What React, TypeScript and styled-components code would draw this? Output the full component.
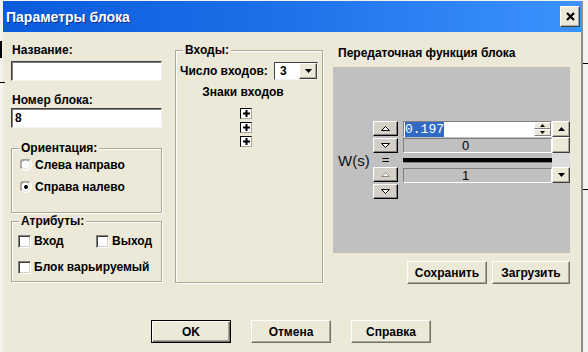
import styled, { createGlobalStyle } from "styled-components";

const GlobalStyle = createGlobalStyle`
	html, body {
		margin: 0;
		padding: 0;
		background: #f4f3ee;
	}
	body {
		position: relative;
		width: 588px;
		height: 352px;
		overflow: hidden;
		font-family: "Liberation Sans", Arial, sans-serif;
		color: #000;
	}
`;

// bits of the window that lies behind the dialog
const Mark = styled.div<{ $top: number; $left: number; $w: number; $h: number }>`
	position: absolute;
	top: ${(p) => p.$top}px;
	left: ${(p) => p.$left}px;
	width: ${(p) => p.$w}px;
	height: ${(p) => p.$h}px;
	background: #000;
`;

const Dialog = styled.div`
	margin: 1px 0 0 3px;
	width: 578px;
	height: 351px;
	border-right: 2px solid #8e8d86;
	background: #ece9d8;
	display: flex;
	flex-direction: column;
`;

const TitleBar = styled.div`
	height: 31px;
	flex-shrink: 0;
	display: flex;
	align-items: center;
	justify-content: space-between;
	padding: 0 1px 0 3px;
	background: linear-gradient(to right, #0a5bdc 0%, #1c6fe8 45%, #3b93fe 100%);
`;

const Title = styled.span`
	color: #fff;
	font: bold 14px "Liberation Sans", Arial, sans-serif;
	text-shadow: 1px 1px 0 #0b2f8a;
`;

const CloseButton = styled.div`
	width: 20px;
	height: 21px;
	box-sizing: border-box;
	display: flex;
	align-items: center;
	justify-content: center;
	background: #ece9d8;
	border: 1px solid;
	border-color: #fff #404040 #404040 #fff;
	box-shadow: inset -1px -1px 0 #aca899;
`;

const Body = styled.div`
	flex: 1;
	display: flex;
	flex-direction: column;
	padding-left: 8px;
`;

const TopRow = styled.div`
	display: flex;
	align-items: flex-start;
`;

const LeftCol = styled.div`
	width: 151px;
	padding-top: 11px;
	display: flex;
	flex-direction: column;
`;

const Label = styled.div<{ $gap?: number }>`
	font-weight: bold;
	font-size: 12px;
	line-height: 14px;
	height: 14px;
	padding-left: 1px;
	margin-top: ${(p) => p.$gap ?? 0}px;
	white-space: nowrap;
`;

const TextBox = styled.div<{ $gap?: number }>`
	height: 20px;
	box-sizing: border-box;
	margin-top: ${(p) => p.$gap ?? 0}px;
	background: #fff;
	border: 1px solid;
	border-color: #404040 #f4f3ee #f4f3ee #404040;
	box-shadow: inset 1px 1px 0 #808080;
	font: bold 12px "Liberation Sans", Arial, sans-serif;
	line-height: 18px;
	padding-left: 3px;
`;

const Group = styled.div<{ $gap?: number; $h: number }>`
	position: relative;
	box-sizing: border-box;
	height: ${(p) => p.$h}px;
	margin-top: ${(p) => p.$gap ?? 0}px;
	border: 1px solid #aca899;
	box-shadow: inset 1px 1px 0 #fff, 1px 1px 0 #fff;
`;

const Legend = styled.span`
	position: absolute;
	top: -8px;
	left: 7px;
	padding: 0 2px;
	background: #ece9d8;
	font-weight: bold;
	font-size: 12px;
	line-height: 14px;
`;

const RadioList = styled.div`
	display: flex;
	flex-direction: column;
	gap: 6px;
	padding: 8px 0 0 8px;
`;

const OptionRow = styled.div<{ $width?: number }>`
	height: 16px;
	display: flex;
	align-items: center;
	gap: 3px;
	font-weight: bold;
	font-size: 12px;
	white-space: nowrap;
	width: ${(p) => (p.$width ? `${p.$width}px` : "auto")};
`;

const CheckList = styled.div`
	display: flex;
	flex-direction: column;
	gap: 10px;
	padding: 11px 0 0 6px;
`;

const CheckLine = styled.div`
	display: flex;
`;

const CheckBox = styled.span`
	width: 13px;
	height: 13px;
	box-sizing: border-box;
	background: #fff;
	border: 1px solid;
	border-color: #808080 #fff #fff #808080;
	box-shadow: inset 1px 1px 0 #404040, inset -1px -1px 0 #d4d0c8;
	flex-shrink: 0;
`;

const MidGroup = styled(Group)`
	width: 148px;
	margin-left: 13px;
	margin-top: 18px;
	padding: 11px 4px 0 4px;
	display: flex;
	flex-direction: column;
`;

const CountRow = styled.div`
	height: 18px;
	display: flex;
	align-items: center;
	justify-content: space-between;
	font-weight: bold;
	font-size: 12px;
`;

const Select = styled.div`
	width: 44px;
	height: 18px;
	box-sizing: border-box;
	display: flex;
	align-items: stretch;
	justify-content: space-between;
	background: #fff;
	border: 1px solid;
	border-color: #404040 #f4f3ee #f4f3ee #404040;
	font-weight: bold;
	font-size: 12px;
	line-height: 16px;
	padding-left: 5px;
`;

const DropButton = styled.span`
	width: 18px;
	box-sizing: border-box;
	display: flex;
	align-items: center;
	justify-content: center;
	background: #ece9d8;
	border: 1px solid;
	border-color: #fff #404040 #404040 #fff;
	box-shadow: inset -1px -1px 0 #aca899;
`;

const Caption = styled.div`
	margin-top: 5px;
	height: 14px;
	line-height: 14px;
	text-align: center;
	padding-right: 12px;
	font-weight: bold;
	font-size: 12px;
`;

const SignList = styled.div`
	margin: 9px 0 0 60px;
	display: flex;
	flex-direction: column;
	gap: 3px;
`;

const SignBox = styled.span`
	width: 12px;
	height: 11px;
	box-sizing: border-box;
	display: flex;
	align-items: center;
	justify-content: center;
	background: #fff;
	border: 1px solid;
	border-color: #000 #aca899 #aca899 #000;
`;

const RightCol = styled.div`
	width: 237px;
	margin-left: 10px;
	display: flex;
	flex-direction: column;
`;

const PanelTitle = styled.div`
	margin-top: 14px;
	padding-left: 5px;
	height: 14px;
	line-height: 14px;
	font-weight: bold;
	font-size: 12px;
	white-space: nowrap;
`;

const Panel = styled.div`
	margin-top: 7px;
	height: 186px;
	background: #c0c0c0;
	display: flex;
	align-items: flex-start;
	padding: 54px 0 0 5px;
	box-sizing: border-box;
`;

const WsLabel = styled.span`
	width: 35px;
	margin-top: 32px;
	font-size: 15px;
	line-height: 16px;
	color: #111;
`;

const ArrowCol = styled.div`
	width: 25px;
	display: flex;
	flex-direction: column;
`;

const ArrowButton = styled.div<{ $gap?: number }>`
	height: 15px;
	box-sizing: border-box;
	margin-top: ${(p) => p.$gap ?? 0}px;
	display: flex;
	align-items: center;
	justify-content: center;
	background: #d4d0c8;
	border: 1px solid;
	border-color: #fff #000 #000 #fff;
	box-shadow: inset -1px -1px 0 #808080;
`;

const Equals = styled.div`
	height: 14px;
	line-height: 14px;
	text-align: center;
	font-size: 13px;
`;

const FieldCol = styled.div`
	width: 149px;
	margin-left: 5px;
	display: flex;
	flex-direction: column;
`;

const EditBox = styled.div`
	height: 16px;
	box-sizing: border-box;
	display: flex;
	background: #fff;
	border: 1px solid;
	border-color: #808080 #fff #fff #808080;
`;

const EditText = styled.div`
	flex: 1;
	padding: 1px 0 0 1px;
	font: 13px "Liberation Mono", "Courier New", monospace;
	line-height: 13px;
`;

const Selection = styled.span`
	background: #316ac5;
	color: #fff;
`;

const Spin = styled.div`
	width: 17px;
	display: flex;
	flex-direction: column;
`;

const SpinHalf = styled.span`
	flex: 1;
	display: flex;
	align-items: center;
	justify-content: center;
	background: #ece9d8;
	border: 1px solid;
	border-color: #fff #808080 #808080 #fff;
`;

const ValueBox = styled.div<{ $gap?: number }>`
	height: 15px;
	box-sizing: border-box;
	margin-top: ${(p) => p.$gap ?? 0}px;
	border: 1px solid;
	border-color: #808080 #fff #fff #808080;
	text-align: center;
	padding-right: 24px;
	font-size: 13px;
	line-height: 13px;
`;

const FractionLine = styled.div`
	height: 15px;
	display: flex;
	align-items: center;
	&::before {
		content: "";
		flex: 1;
		height: 4px;
		background: #000;
		border-bottom: 1px solid #808080;
	}
`;

const ScrollBar = styled.div`
	width: 18px;
	height: 62px;
	display: flex;
	flex-direction: column;
	background: #dcdcdc;
`;

const ScrollButton = styled.div`
	height: 16px;
	box-sizing: border-box;
	display: flex;
	align-items: center;
	justify-content: center;
	background: #ece9d8;
	border: 1px solid;
	border-color: #fff #404040 #404040 #fff;
	box-shadow: inset -1px -1px 0 #aca899;
`;

const Thumb = styled(ScrollButton)``;

const Track = styled.div`
	flex: 1;
`;

const PanelButtons = styled.div`
	margin-top: 8px;
	display: flex;
	justify-content: flex-end;
	gap: 5px;
`;

const Button = styled.div<{ $w: number; $default?: boolean }>`
	width: ${(p) => p.$w}px;
	height: 23px;
	box-sizing: border-box;
	display: flex;
	align-items: center;
	justify-content: center;
	background: #ece9d8;
	font-weight: bold;
	font-size: 12px;
	border: 1px solid;
	border-color: ${(p) => (p.$default ? "#000" : "#fff #716f64 #716f64 #fff")};
	box-shadow: ${(p) =>
		p.$default
			? "inset 1px 1px 0 #fff, inset -1px -1px 0 #716f64, inset -2px -2px 0 #aca899"
			: "inset -1px -1px 0 #aca899"};
`;

const BottomRow = styled.div`
	margin: 36px 0 0 140px;
	display: flex;
	gap: 20px;
`;

function Radio({ checked }: { checked?: boolean }) {
	return (
		<svg width="12" height="12" viewBox="0 0 12 12">
			<circle cx="6" cy="6" r="5.5" fill="#fff" />
			<path d="M1.2 9.8 A5.4 5.4 0 0 1 9.8 1.2" fill="none" stroke="#808080" />
			<path d="M2.2 8.8 A4.2 4.2 0 0 1 8.8 2.2" fill="none" stroke="#404040" strokeWidth="0.8" />
			<path d="M9.8 1.2 A5.4 5.4 0 0 1 1.2 9.8" fill="none" stroke="#fff" />
			<path d="M8.8 2.2 A4.2 4.2 0 0 1 2.2 8.8" fill="none" stroke="#d4d0c8" strokeWidth="0.8" />
			{checked && <circle cx="6" cy="6" r="2" fill="#000" />}
		</svg>
	);
}

function Outline({ dir, dim }: { dir: "up" | "down"; dim?: boolean }) {
	const pts = dir === "up" ? "1.5,5.5 5.5,1.5 9.5,5.5" : "1.5,1.5 9.5,1.5 5.5,5.5";
	return (
		<svg width="11" height="7" viewBox="0 0 11 7">
			<polygon points={pts} fill="#fff" stroke={dim ? "#8a8a8a" : "#000"} />
		</svg>
	);
}

function Solid({ dir, size = 7 }: { dir: "up" | "down"; size?: number }) {
	const h = Math.ceil(size / 2);
	const pts = dir === "up" ? `0,${h} ${size / 2},0 ${size},${h}` : `0,0 ${size},0 ${size / 2},${h}`;
	return (
		<svg width={size} height={h} viewBox={`0 0 ${size} ${h}`}>
			<polygon points={pts} fill="#000" />
		</svg>
	);
}

function Plus() {
	return (
		<svg width="7" height="7" viewBox="0 0 7 7">
			<path d="M0 3.5H7M3.5 0V7" stroke="#000" strokeWidth="2" />
		</svg>
	);
}

function App() {
	return (
		<>
			<GlobalStyle />
			<Mark $top={41} $left={0} $w={2} $h={17} />
			<Mark $top={82} $left={0} $w={5} $h={1} />
			<Mark $top={63} $left={583} $w={5} $h={1} />
			<Mark $top={189} $left={583} $w={5} $h={1} />
			<Dialog>
				<TitleBar>
					<Title>Параметры блока</Title>
					<CloseButton>
						<svg width="9" height="9" viewBox="0 0 9 9">
							<path d="M1 1L8 8M8 1L1 8" stroke="#000" strokeWidth="2.2" />
						</svg>
					</CloseButton>
				</TitleBar>
				<Body>
					<TopRow>
						<LeftCol>
							<Label>Название:</Label>
							<TextBox $gap={4} />
							<Label $gap={12}>Номер блока:</Label>
							<TextBox $gap={1}>8</TextBox>
							<Group $gap={20} $h={65}>
								<Legend>Ориентация:</Legend>
								<RadioList>
									<OptionRow>
										<Radio />
										Слева направо
									</OptionRow>
									<OptionRow>
										<Radio checked />
										Справа налево
									</OptionRow>
								</RadioList>
							</Group>
							<Group $gap={8} $h={61}>
								<Legend>Атрибуты:</Legend>
								<CheckList>
									<CheckLine>
										<OptionRow $width={78}>
											<CheckBox />
											Вход
										</OptionRow>
										<OptionRow>
											<CheckBox />
											Выход
										</OptionRow>
									</CheckLine>
									<OptionRow>
										<CheckBox />
										Блок варьируемый
									</OptionRow>
								</CheckList>
							</Group>
						</LeftCol>

						<MidGroup $h={233}>
							<Legend>Входы:</Legend>
							<CountRow>
								Число входов:
								<Select>
									3
									<DropButton>
										<Solid dir="down" />
									</DropButton>
								</Select>
							</CountRow>
							<Caption>Знаки входов</Caption>
							<SignList>
								{[0, 1, 2].map((i) => (
									<SignBox key={i}>
										<Plus />
									</SignBox>
								))}
							</SignList>
						</MidGroup>

						<RightCol>
							<PanelTitle>Передаточная функция блока</PanelTitle>
							<Panel>
								<WsLabel>W(s)</WsLabel>
								<ArrowCol>
									<ArrowButton>
										<Outline dir="up" />
									</ArrowButton>
									<ArrowButton $gap={2}>
										<Outline dir="down" />
									</ArrowButton>
									<Equals>=</Equals>
									<ArrowButton>
										<Outline dir="up" dim />
									</ArrowButton>
									<ArrowButton $gap={2}>
										<Outline dir="down" />
									</ArrowButton>
								</ArrowCol>
								<FieldCol>
									<EditBox>
										<EditText>
											<Selection>0.197</Selection>
										</EditText>
										<Spin>
											<SpinHalf>
												<Solid dir="up" size={5} />
											</SpinHalf>
											<SpinHalf>
												<Solid dir="down" size={5} />
											</SpinHalf>
										</Spin>
									</EditBox>
									<ValueBox $gap={1}>0</ValueBox>
									<FractionLine />
									<ValueBox>1</ValueBox>
								</FieldCol>
								<ScrollBar>
									<ScrollButton>
										<Solid dir="up" />
									</ScrollButton>
									<Thumb />
									<Track />
									<ScrollButton>
										<Solid dir="down" />
									</ScrollButton>
								</ScrollBar>
							</Panel>
							<PanelButtons>
								<Button $w={80}>Сохранить</Button>
								<Button $w={78}>Загрузить</Button>
							</PanelButtons>
						</RightCol>
					</TopRow>
					<BottomRow>
						<Button $w={80} $default>
							OK
						</Button>
						<Button $w={80}>Отмена</Button>
						<Button $w={80}>Справка</Button>
					</BottomRow>
				</Body>
			</Dialog>
		</>
	);
}

export default App;
